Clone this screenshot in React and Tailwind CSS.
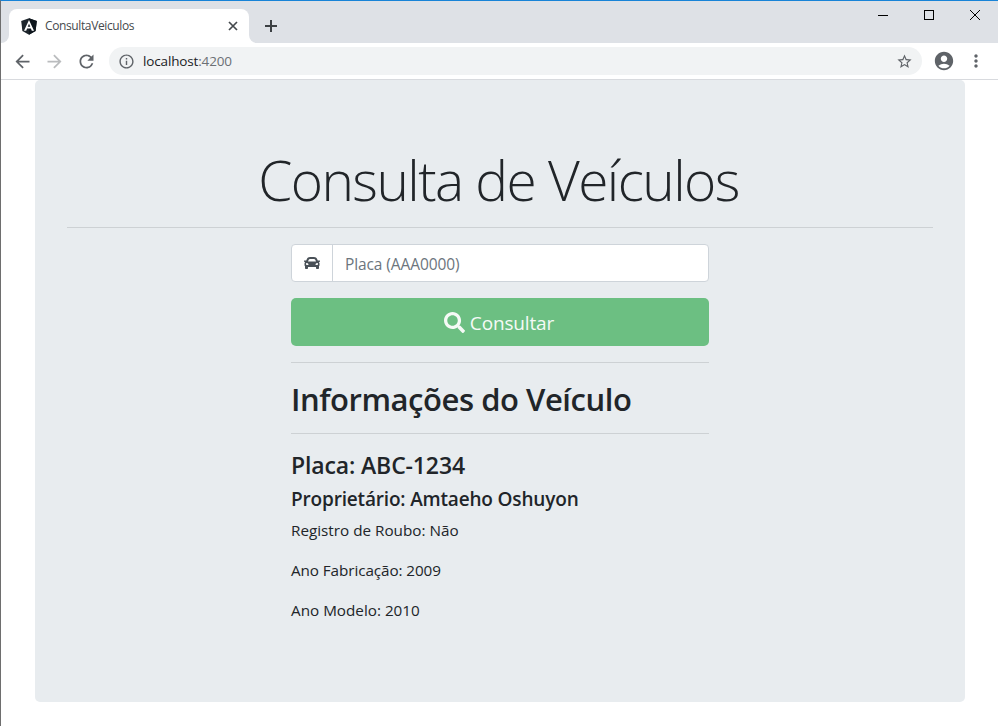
import React from "react";
import { FaCar, FaSearch } from "react-icons/fa";
import {
  MdArrowBack,
  MdArrowForward,
  MdRefresh,
  MdInfoOutline,
  MdStarBorder,
  MdAccountCircle,
  MdMoreVert,
} from "react-icons/md";

function AngularLogo() {
  return (
    <svg width="16" height="17" viewBox="0 0 16 17" className="block shrink-0">
      <path d="M8 0.2 15.8 3 14.6 13 8 16.8 1.4 13 0.2 3Z" fill="#1d252c" />
      <path d="M8 0.2 15.8 3 14.6 13 8 16.8Z" fill="#0e161d" />
      <path
        d="M8 1.9 3 12.8H5.2L6.1 10.5H9.9L10.8 12.8H13ZM8 5.8 9.3 8.8H6.7Z"
        fill="#fff"
        fillRule="evenodd"
      />
    </svg>
  );
}

function TabStrip() {
  return (
    <div className="flex h-[42px] items-end bg-[#dee1e6]">
      <div className="h-2 w-2 shrink-0 bg-white">
        <div className="h-2 w-2 rounded-br-lg bg-[#dee1e6]" />
      </div>
      <div className="flex h-[34px] w-[240px] items-center rounded-t-lg bg-white pr-[11px] pl-3">
        <AngularLogo />
        <span className="ml-2 text-[12px] tracking-[-0.38px] text-[#45494d]">ConsultaVeiculos</span>
        <svg width="10" height="10" viewBox="0 0 10 10" className="ml-auto">
          <path d="M1 1 9 9M9 1 1 9" stroke="#45494d" strokeWidth="1.7" />
        </svg>
      </div>
      <div className="h-2 w-2 shrink-0 bg-white">
        <div className="h-2 w-2 rounded-bl-lg bg-[#dee1e6]" />
      </div>
      <svg width="12" height="12" viewBox="0 0 12 12" className="mb-[11px] ml-2">
        <path d="M6 0V12M0 6H12" stroke="#3c4043" strokeWidth="2" />
      </svg>
      <div className="ml-auto flex h-full items-start pt-[9px] pr-[18px]">
        <svg width="10" height="10" viewBox="0 0 10 10" className="mr-9">
          <path d="M0 5.5H10" stroke="#000" />
        </svg>
        <svg width="10" height="10" viewBox="0 0 10 10" className="mr-9">
          <rect x="0.5" y="0.5" width="9" height="9" fill="none" stroke="#000" />
        </svg>
        <svg width="10" height="10" viewBox="0 0 10 10">
          <path d="M0 0 10 10M10 0 0 10" stroke="#000" />
        </svg>
      </div>
    </div>
  );
}

function Toolbar() {
  return (
    <div className="flex h-[37px] items-center border-b border-[#d8dade] bg-white pl-[11px] text-[#5f6368]">
      <MdArrowBack size={21} className="shrink-0" />
      <MdArrowForward size={21} className="ml-[11px] shrink-0 text-[#babcbe]" />
      <MdRefresh size={21} className="ml-[11px] shrink-0" />
      <div className="ml-3 flex h-7 w-[813px] items-center rounded-full bg-[#f1f3f4] pr-[9px] pl-[9px]">
        <MdInfoOutline size={17} />
        <span className="ml-2 text-[13.5px] tracking-[-0.15px] text-[#202124]">
          localhost<span className="text-[#6c7075]">:4200</span>
        </span>
        <MdStarBorder size={17} className="ml-auto" />
      </div>
      <MdAccountCircle size={22} className="ml-[11px] shrink-0" />
      <MdMoreVert size={20} className="ml-[11px] shrink-0" />
    </div>
  );
}

function Divider() {
  return <div className="my-4 h-px bg-[#cdd1d4]" />;
}

export default function App() {
  return (
    <div className="h-[726px] w-[998px] overflow-hidden border-t border-l border-t-[#1883d7] border-l-[#6e6e6e] bg-white font-['Open_Sans','Noto_Sans',sans-serif] text-[#212529]">
      <TabStrip />
      <Toolbar />
      <main className="ml-[34px] h-[622px] w-[930px] rounded-[5px] bg-[#e8ecef] px-8 pt-16">
        <h1 className="h-[67px] pr-[3px] text-center text-[55px] leading-[71px] font-light tracking-[-1.55px] whitespace-nowrap">
          Consulta de Veículos
        </h1>
        <Divider />
        <section className="mx-auto w-[418px]">
          <div className="flex h-[38px] overflow-hidden rounded-[4px] border border-[#ced4da] bg-white">
            <div className="flex w-[41px] items-center justify-center border-r border-[#ced4da] text-[#495057]">
              <FaCar size={16} />
            </div>
            <input
              placeholder="Placa (AAA0000)"
              className="min-w-0 flex-1 px-3 pt-[3px] text-[15.5px] tracking-[-0.1px] outline-none placeholder:text-[#6c757d]"
            />
          </div>
          <button className="mt-4 flex h-12 w-full items-center justify-center gap-[5px] rounded-[5px] bg-[#6cbf82] pr-[2px] text-[19px] text-[#f5faf6]">
            <FaSearch size={21} />
            <span className="pt-[2px] tracking-[-0.15px]">Consultar</span>
          </button>
          <Divider />
          <h2 className="h-[38px] text-[31px] leading-[40px] font-semibold tracking-[-0.45px] whitespace-nowrap">Informações do Veículo</h2>
          <Divider />
          <h4 className="h-[29px] text-[23px] leading-[31px] font-semibold tracking-[-0.13px] whitespace-nowrap">Placa: ABC-1234</h4>
          <h5 className="mt-2 h-6 text-[19px] leading-[25px] font-semibold tracking-[-0.17px] whitespace-nowrap">Proprietário: Amtaeho Oshuyon</h5>
          <div className="mt-[7px] space-y-4 text-[15.25px] leading-6">
            <p>Registro de Roubo: Não</p>
            <p className="tracking-[-0.08px]">Ano Fabricação: 2009</p>
            <p>Ano Modelo: 2010</p>
          </div>
        </section>
      </main>
    </div>
  );
}
